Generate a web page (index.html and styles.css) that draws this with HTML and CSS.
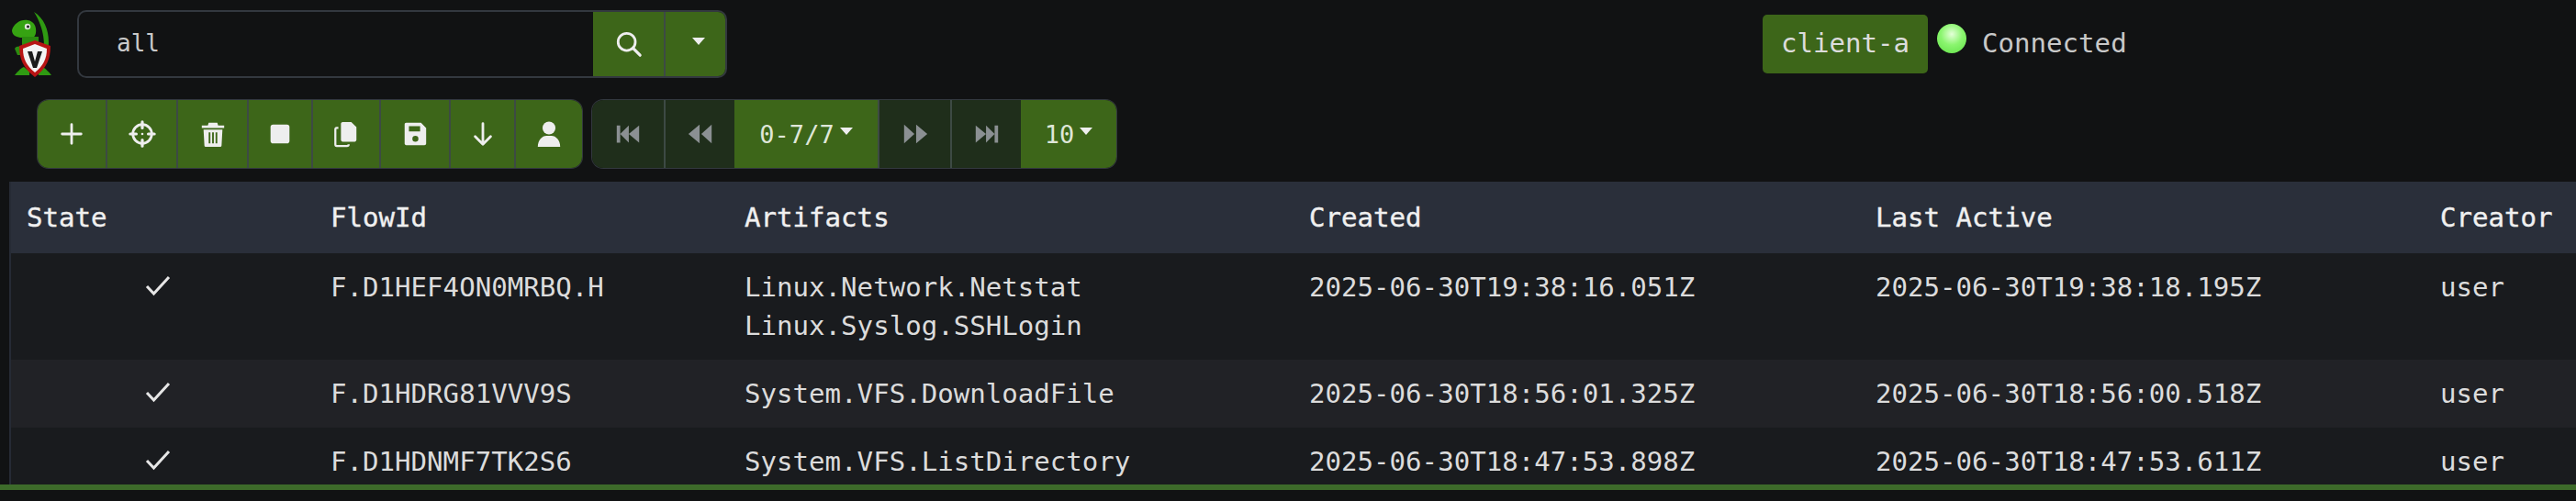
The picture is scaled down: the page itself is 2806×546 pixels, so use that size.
FILE: index.html
```html
<!DOCTYPE html>
<html lang="en">
<head>
    <meta charset="UTF-8">
    <title>Flows</title>
    <link rel="stylesheet" href="styles.css">
</head>
<body>

    <div class="top-row">
        <svg class="logo" viewBox="0 0 60 72" aria-label="Velociraptor">
            <path d="M27 1 C38 8 43 20 43 34 C43 40 42 44 40 47 L37 47 C39 38 39 20 27 1 Z" fill="#2f9a12"/>
            <path d="M3 21 C5 14 12 9 20 10 C27 11 30 17 29 24 C28 30 22 32 17 31 L14 29 C9 29 3 27 3 21 Z" fill="#36a312"/>
            <path d="M14 28 L32 28 L32 42 L14 42 Z" fill="#2c8c10"/>
            <path d="M6 41 C8 38 12 38 14 40 L14 48 L9 48 Z" fill="#2c8c10"/>
            <path d="M6 70 C9 66 13 62 16 61 L22 66 L22 70 Z" fill="#2f9a12"/>
            <path d="M46 70 C43 66 39 62 36 61 L32 66 L32 70 Z" fill="#2f9a12"/>
            <circle cx="20" cy="17" r="3.2" fill="#dfe6da"/>
            <circle cx="20.5" cy="17" r="1.5" fill="#222"/>
            <path d="M28 32 L45 38 C45 52 41 62 28 72 C15 62 11 52 11 38 Z" fill="#b81414"/>
            <path d="M28 36 L41 41 C41 52 37 60 28 67 C19 60 15 52 15 41 Z" fill="#f3f3f3"/>
            <path d="M20 44 L25 44 L28 55 L31 44 L36 44 L30 62 L26 62 Z" fill="#1b1b1b"/>
        </svg>
        <div class="search-box">
            <div class="search-input">all</div>
            <button class="btn btn-search">
                <svg class="icon" viewBox="0 0 32 32"><circle cx="13.5" cy="13.5" r="10" fill="none" stroke="#eee" stroke-width="3"/><path d="M21 21 L29 29" stroke="#eee" stroke-width="3.4" stroke-linecap="round"/></svg>
            </button>
            <button class="btn btn-caret"><span class="caret"></span></button>
        </div>
        <div class="client-badge">client-a</div>
        <span class="status-light"></span>
        <span class="status-text">Connected</span>
    </div>

    <div class="toolbar-row">
        <div class="btn-group actions">
            <button class="btn w-74">
                <svg class="icon" viewBox="0 0 32 32"><path d="M16 5 V27 M5 16 H27" stroke="#eee" stroke-width="3" stroke-linecap="round"/></svg>
            </button>
            <button class="btn w-77">
                <svg class="icon" viewBox="0 0 32 32"><circle cx="16" cy="16" r="11" fill="none" stroke="#eee" stroke-width="3"/><path d="M16 2 V9 M16 23 V30 M2 16 H9 M23 16 H30" stroke="#eee" stroke-width="3.4" stroke-linecap="round"/><circle cx="16" cy="16" r="1.4" fill="#eee"/></svg>
            </button>
            <button class="btn w-77">
                <svg class="icon" viewBox="0 0 32 32"><path d="M11 3 H21 L22 6 H29 V9 H3 V6 H10 Z" fill="#eee"/><path fill-rule="evenodd" d="M5 11 H27 L26 29 C26 30.500 25 31 24 31 H8 C7 31 6 30.500 6 29 Z M11 14 V27 H13 V14 Z M15 14 V27 H17 V14 Z M19 14 V27 H21 V14 Z" fill="#eee"/></svg>
            </button>
            <button class="btn w-70">
                <svg class="icon" viewBox="0 0 32 32"><rect x="5" y="5" width="22" height="22" rx="3" fill="#eee"/></svg>
            </button>
            <button class="btn w-74">
                <svg class="icon" viewBox="0 0 32 32"><path d="M12 2 H22 L28 8 V23 C28 24 27 25 26 25 H12 C11 25 10 24 10 23 V4 C10 3 11 2 12 2 Z" fill="#eee"/><path d="M7 9 H5 C4 9 3.500 10 3.500 11 V28 C3.500 29 4 30 5 30 H17 C18 30 19 29 19 28" fill="none" stroke="#eee" stroke-width="2.400"/></svg>
            </button>
            <button class="btn w-76">
                <svg class="icon" viewBox="0 0 32 32"><path fill-rule="evenodd" d="M6 3 H23 L29 9 V27 C29 28.500 28 29 27 29 H6 C4.500 29 4 28 4 27 V5 C4 4 4.500 3 6 3 Z M9 7 V13 H22 V7 Z M16.500 18 A3.500 3.500 0 1 0 16.501 25 A3.500 3.500 0 1 0 16.500 18 Z" fill="#eee"/></svg>
            </button>
            <button class="btn w-71">
                <svg class="icon" viewBox="0 0 32 32"><path d="M16 4 V28 M7 19 L16 28 L25 19" fill="none" stroke="#eee" stroke-width="3" stroke-linecap="round" stroke-linejoin="round"/></svg>
            </button>
            <button class="btn w-74">
                <svg class="icon" viewBox="0 0 32 32"><circle cx="16" cy="9" r="7.500" fill="#eee"/><path d="M3 31 C3 23 8 18 13 18 H19 C24 18 29 23 29 31 Z" fill="#eee"/></svg>
            </button>
        </div>

        <div class="btn-group pager">
            <button class="btn w-78 off">
                <svg class="icon" viewBox="0 0 32 32"><path d="M3 6 H7 V26 H3 Z M17 6 V26 L7 16 Z M29 6 V26 L17 16 Z" fill="#8b9093"/></svg>
            </button>
            <button class="btn w-77 off">
                <svg class="icon" viewBox="0 0 32 32"><path d="M15 5 V27 L2 16 Z M29 5 V27 L17 16 Z" fill="#8b9093"/></svg>
            </button>
            <button class="btn w-156 text-btn">0-7/7<span class="caret"></span></button>
            <button class="btn w-79 off">
                <svg class="icon" viewBox="0 0 32 32"><path d="M3 5 V27 L15 16 Z M17 5 V27 L30 16 Z" fill="#8b9093"/></svg>
            </button>
            <button class="btn w-77 off">
                <svg class="icon" viewBox="0 0 32 32"><path d="M3 6 V26 L15 16 Z M15 6 V26 L25 16 Z M25 6 H29 V26 H25 Z" fill="#8b9093"/></svg>
            </button>
            <button class="btn w-104 text-btn">10<span class="caret"></span></button>
        </div>
    </div>

    <div class="table-wrap">
        <table class="flows">
            <colgroup>
                <col class="col-state">
                <col class="col-flow">
                <col class="col-artifacts">
                <col class="col-created">
                <col class="col-active">
                <col>
            </colgroup>
            <thead>
                <tr>
                    <th>State</th>
                    <th>FlowId</th>
                    <th>Artifacts</th>
                    <th>Created</th>
                    <th>Last Active</th>
                    <th>Creator</th>
                </tr>
            </thead>
            <tbody>
                <tr>
                    <td class="state"><svg class="check" viewBox="0 0 28 24"><path d="M2 13 L9.500 21 L26 3" fill="none" stroke="#e6e6e6" stroke-width="3"/></svg></td>
                    <td>F.D1HEF4ON0MRBQ.H</td>
                    <td>Linux.Network.Netstat<br>Linux.Syslog.SSHLogin</td>
                    <td>2025-06-30T19:38:16.051Z</td>
                    <td>2025-06-30T19:38:18.195Z</td>
                    <td>user</td>
                </tr>
                <tr>
                    <td class="state"><svg class="check" viewBox="0 0 28 24"><path d="M2 13 L9.500 21 L26 3" fill="none" stroke="#e6e6e6" stroke-width="3"/></svg></td>
                    <td>F.D1HDRG81VVV9S</td>
                    <td>System.VFS.DownloadFile</td>
                    <td>2025-06-30T18:56:01.325Z</td>
                    <td>2025-06-30T18:56:00.518Z</td>
                    <td>user</td>
                </tr>
                <tr>
                    <td class="state"><svg class="check" viewBox="0 0 28 24"><path d="M2 13 L9.500 21 L26 3" fill="none" stroke="#e6e6e6" stroke-width="3"/></svg></td>
                    <td>F.D1HDNMF7TK2S6</td>
                    <td>System.VFS.ListDirectory</td>
                    <td>2025-06-30T18:47:53.898Z</td>
                    <td>2025-06-30T18:47:53.611Z</td>
                    <td>user</td>
                </tr>
            </tbody>
        </table>
    </div>

    <div class="footer-line"></div>

</body>
</html>
```

FILE: styles.css
```css
html, body {
    margin: 0;
    height: 546px;
    overflow: hidden;
    background-color: #111213;
}

body {
    font-family: "DejaVu Sans Mono", "Liberation Mono", monospace;
    font-size: 29.1px;
    color: #e2e2e2;
}

button {
    font-family: inherit;
    color: inherit;
}

.top-row {
    display: flex;
    align-items: center;
    height: 74px;
    padding: 11px 0 0 10px;
}

.logo {
    width: 60px;
    height: 72px;
    margin-right: 14px;
}

.search-box {
    display: flex;
    width: 708px;
    height: 74px;
    box-sizing: border-box;
    border: 2px solid #33383f;
    border-radius: 10px;
    overflow: hidden;
}

.search-input {
    flex: 1;
    padding-left: 41px;
    font-size: 26px;
    line-height: 68px;
    color: #c9c9c9;
}

.btn {
    display: flex;
    align-items: center;
    justify-content: center;
    padding: 0;
    border: none;
    border-left: 2px solid #3d4a44;
    box-sizing: border-box;
    height: 100%;
    background-color: #3d6619;
}

.btn:first-child {
    border-left: none;
}

.btn-search {
    width: 77px;
    border-left: none;
}

.btn-caret {
    width: 67px;
}

.icon {
    width: 30px;
    height: 30px;
}

.caret {
    display: inline-block;
    width: 0;
    height: 0;
    margin-left: 6px;
    border-left: 7px solid transparent;
    border-right: 7px solid transparent;
    border-top: 8px solid #eee;
    transform: translateY(-3px);
}

.client-badge {
    width: 180px;
    height: 64px;
    margin-left: 1128px;
    border-radius: 5px;
    background-color: #3d6619;
    font-size: 29.1px;
    line-height: 62px;
    text-align: center;
    color: #dcdcdc;
}

.status-light {
    width: 32px;
    height: 32px;
    margin: -12px 17px 0 10px;
    border-radius: 50%;
    background: radial-gradient(circle at 50% 35%, #e4ffd8 0%, #8bf56f 45%, #5fe045 100%);
}

.status-text {
    margin-top: -2px;
    color: #c8c8c8;
}

.toolbar-row {
    display: flex;
    gap: 11px;
    height: 74px;
    margin: 24px 0 0 41px;
}

.btn-group {
    display: flex;
    height: 74px;
    border-radius: 12px;
    overflow: hidden;
    box-shadow: 0 0 0 1px #33383f;
}

.w-70 { width: 70px; }
.w-71 { width: 71px; }
.w-74 { width: 74px; }
.w-76 { width: 76px; }
.w-77 { width: 77px; }
.w-78 { width: 78px; }
.w-79 { width: 79px; }
.w-104 { width: 104px; }
.w-156 { width: 156px; }

.off {
    background-color: #1f2e1b;
}

.text-btn {
    font-size: 27px;
    color: #dfe6d8;
    border-left: none;
}

.table-wrap {
    height: 330px;
    margin: 15px 0 0 10px;
    overflow: hidden;
    border-left: 2px solid #262b35;
}

.flows {
    width: 2796px;
    border-collapse: collapse;
    table-layout: fixed;
}

.col-state { width: 329px; }
.col-flow { width: 451px; }
.col-artifacts { width: 615px; }
.col-created { width: 617px; }
.col-active { width: 615px; }

.flows th {
    height: 78px;
    padding: 0 0 0 19px;
    text-align: left;
    font-weight: normal;
    background-color: #2a2f3a;
    color: #f0f0f0;
    -webkit-text-stroke: 0.4px #f0f0f0;
}

.flows th:first-child {
    padding-left: 17px;
}

.flows td {
    padding: 16px 0 16px 19px;
    line-height: 42px;
    vertical-align: top;
    background-color: #191b1e;
    color: #dcdcdc;
}

.flows tbody tr:nth-child(2) td {
    background-color: #212226;
}

.flows td.state {
    padding-left: 0;
    padding-right: 10px;
    text-align: center;
}

.check {
    width: 28px;
    height: 24px;
    margin-top: 4px;
}

.footer-line {
    height: 6px;
    background-color: #3d6b2a;
}
```
